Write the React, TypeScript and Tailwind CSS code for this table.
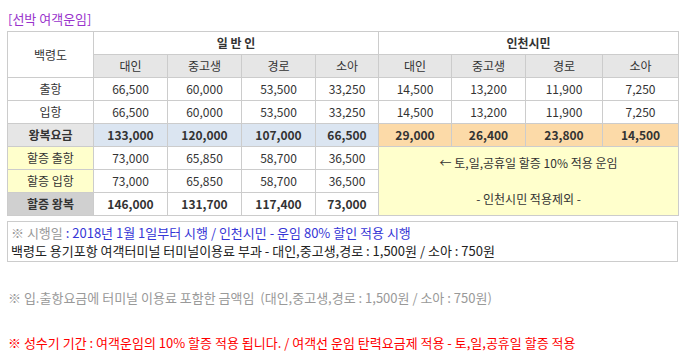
import React from "react";

const F = { fontFamily: '"Noto Sans CJK KR", "Noto Sans", sans-serif' };

const td = "border border-[#cccccc] text-center align-middle p-0 h-[23px]";

export default function App() {
  const general = [
    ["출항", "66,500", "60,000", "53,500", "33,250", "14,500", "13,200", "11,900", "7,250"],
    ["입항", "66,500", "60,000", "53,500", "33,250", "14,500", "13,200", "11,900", "7,250"],
  ];
  const surcharge = [
    ["할증 출항", "73,000", "65,850", "58,700", "36,500"],
    ["할증 입항", "73,000", "65,850", "58,700", "36,500"],
  ];
  return (
    <div className="w-[687px] h-[362px] bg-white text-[12px] leading-[18px] text-[#333333] overflow-hidden" style={F}>
      <div className="pl-[8px] pt-[10px] h-[31px] text-[#9933cc] text-[13px] leading-[18px]">[선박 여객운임]</div>
      <div className="pl-[7px]">
        <table className="table-fixed border-collapse w-[671px]">
          <colgroup>
            <col className="w-[86px]" />
            <col className="w-[74px]" />
            <col className="w-[74px]" />
            <col className="w-[74px]" />
            <col className="w-[63px]" />
            <col className="w-[73px]" />
            <col className="w-[74px]" />
            <col className="w-[77px]" />
            <col className="w-[76px]" />
          </colgroup>
          <tbody>
            <tr>
              <td rowSpan={2} className={td}>백령도</td>
              <td colSpan={4} className={`${td} font-bold`}>일 반 인</td>
              <td colSpan={4} className={`${td} font-bold`}>인천시민</td>
            </tr>
            <tr className="bg-[#e6e6e6]">
              {["대인", "중고생", "경로", "소아", "대인", "중고생", "경로", "소아"].map((h, i) => (
                <td key={i} className={td}>{h}</td>
              ))}
            </tr>
            {general.map((r, i) => (
              <tr key={i}>
                {r.map((c, j) => (
                  <td key={j} className={td}>{c}</td>
                ))}
              </tr>
            ))}
            <tr className="font-bold">
              <td className={`${td} bg-[#e6e6e6]`}>왕복요금</td>
              {["133,000", "120,000", "107,000", "66,500"].map((c, j) => (
                <td key={j} className={`${td} bg-[#dbe5f1]`}>{c}</td>
              ))}
              {["29,000", "26,400", "23,800", "14,500"].map((c, j) => (
                <td key={j} className={`${td} bg-[#fcdaa8]`}>{c}</td>
              ))}
            </tr>
            {surcharge.map((r, i) => (
              <tr key={i}>
                <td className={`${td} bg-[#ffffcc]`}>{r[0]}</td>
                {r.slice(1).map((c, j) => (
                  <td key={j} className={td}>{c}</td>
                ))}
                {i === 0 && (
                  <td rowSpan={3} colSpan={4} className={`${td} bg-[#ffffcc]`}>
                    ← 토,일,공휴일 할증 10% 적용 운임
                    <br />
                    <br />- 인천시민 적용제외 -
                  </td>
                )}
              </tr>
            ))}
            <tr className="font-bold">
              <td className={`${td} bg-[#d0d0d0]`}>할증 왕복</td>
              {["146,000", "131,700", "117,400", "73,000"].map((c, j) => (
                <td key={j} className={td}>{c}</td>
              ))}
            </tr>
          </tbody>
        </table>
        <div className="mt-[5px] w-[671px] border border-[#cccccc] px-[3px] pt-[2px] pb-[2px] h-[41px] text-[13px] leading-[18px]">
          <div className="h-[18px]">
            <span className="text-[#999999]">※ 시행일 </span>
            <span className="text-[#3636d6]">: 2018년 1월 1일부터 시행 / 인천시민 - 운임 80% 할인 적용 시행</span>
          </div>
          <div className="h-[18px] text-[#222222]">
            백령도 용기포항 여객터미널 터미널이용료 부과 - 대인,중고생,경로 : 1,500원 / 소아 : 750원
          </div>
        </div>
      </div>
      <div className="pl-[8px] mt-[27px] text-[13px] leading-[18px] text-[#999999]">
        ※ 입.출항요금에 터미널 이용료 포함한 금액임&nbsp;&nbsp;(대인,중고생,경로 : 1,500원 / 소아 : 750원)
      </div>
      <div className="pl-[8px] mt-[27px] text-[13px] leading-[18px] text-[#ff0000]">
        ※ 성수기 기간 : 여객운임의 10% 할증 적용 됩니다. / 여객선 운임 탄력요금제 적용 - 토,일,공휴일 할증 적용
      </div>
    </div>
  );
}
